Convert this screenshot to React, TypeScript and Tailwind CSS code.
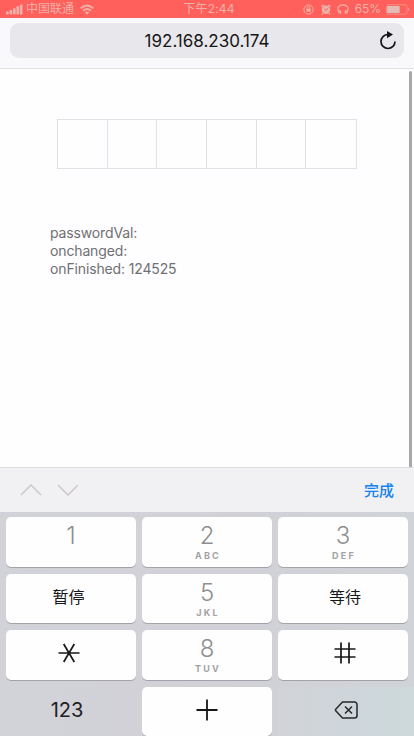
import React from "react";

const latin = "font-['Inter','Noto_Sans_CJK_SC',sans-serif]";

function StatusBar() {
  return (
    <header className="grid h-[18px] shrink-0 grid-cols-3 items-center bg-[#ff605c] text-[12px] leading-none text-[#eeb0a9]">
      <div className="flex items-center pl-[6px]">
        <svg width="17" height="11" viewBox="0 0 17 11" fill="currentColor">
          <rect x="0" y="7.5" width="2.7" height="3" rx=".7" />
          <rect x="3.5" y="6" width="2.7" height="4.5" rx=".7" />
          <rect x="7" y="4.2" width="2.7" height="6.3" rx=".7" />
          <rect x="10.4" y="2.3" width="2.7" height="8.2" rx=".7" />
          <rect x="13.8" y=".5" width="2.7" height="10" rx=".7" />
        </svg>
        <span className="ml-[3px] whitespace-nowrap">中国联通</span>
        <svg className="ml-[6px]" width="14" height="11" viewBox="0 0 14 11" fill="none" stroke="currentColor" strokeWidth="1.9">
          <path d="M.8 4.2Q7-1.4 13.2 4.2M3.2 6.7Q7 3.3 10.8 6.7" />
          <path d="M4.8 8.3Q7 6.6 9.2 8.3L7 10.7Z" fill="currentColor" stroke="none" />
        </svg>
      </div>
      <div className="whitespace-nowrap pl-[4px] text-center tracking-[0.2px]">下午2:44</div>
      <div className="flex items-center justify-end pr-[4px]">
        <svg width="11" height="11" viewBox="0 0 11 11" fill="none" stroke="currentColor">
          <circle cx="5.5" cy="5.5" r="4.6" />
          <path d="M4.2 5V3.8a1.3 1.3 0 0 1 2.6 0V5" />
          <rect x="3.4" y="4.8" width="4.2" height="3" fill="currentColor" stroke="none" />
        </svg>
        <svg className="ml-[7px]" width="10" height="11" viewBox="0 0 10 11">
          <circle cx="5" cy="5.8" r="4.2" fill="currentColor" />
          <path d="M.6 2.7 2.6.9M9.4 2.7 7.4.9M2 9.3 1 10.5M8 9.3l1 1.2" stroke="currentColor" strokeWidth="1.5" />
          <path d="m3 4.8 1.8 1.6L7.3 4" fill="none" stroke="#ff605c" />
        </svg>
        <svg className="ml-[6px]" width="12" height="11" viewBox="0 0 12 11" fill="none" stroke="currentColor" strokeWidth="1.2">
          <path d="M2.3 9C-.8 3.5 2 .8 6 .8S12.8 3.5 9.7 9" />
          <path d="M3.3 6.2v3.5M8.7 6.2v3.5" strokeWidth="1.8" />
        </svg>
        <span className="ml-[6px] tracking-[-0.1px]">65%</span>
        <svg className="ml-[5px]" width="24" height="11" viewBox="0 0 24 11">
          <rect x=".5" y=".8" width="20.5" height="9.4" rx="2" fill="none" stroke="currentColor" strokeOpacity=".55" />
          <rect x="1.2" y="2" width="12.5" height="7" rx=".8" fill="#e5bcb5" />
          <path d="M22.2 3.8q2 1.7 0 3.4z" fill="currentColor" />
        </svg>
      </div>
    </header>
  );
}

function Key({ digit, letters, children }: { digit?: string; letters?: string; children?: React.ReactNode }) {
  return (
    <button className="flex h-[49.5px] flex-col items-center rounded-[5px] bg-[#fefefe] text-[#171717] shadow-[0_1px_0_#a2a2a8]">
      {digit ? (
        <>
          <span className="mt-[4px] text-[24px] font-light leading-[29px] text-[#8e8e90]">{digit}</span>
          <span className="pt-[1px] pl-[2px] text-[9px] font-bold leading-[10px] tracking-[2.2px] text-[#a2a2a4]">{letters}</span>
        </>
      ) : (
        <span className="flex h-[46px] w-full items-center justify-center text-[16px]">{children}</span>
      )}
    </button>
  );
}

function Keypad() {
  return (
    <section className="grid h-[224px] shrink-0 grid-cols-3 content-start gap-x-[6px] gap-y-[7px] overflow-hidden bg-gradient-to-r from-[#d2d2d9] via-[#d1d1d7] to-[#d0d3d7] px-[6px] pt-[5px]">
      <Key digit="1" />
      <Key digit="2" letters="ABC" />
      <Key digit="3" letters="DEF" />
      <Key><span className="-ml-[5px]">暂停</span></Key>
      <Key digit="5" letters="JKL" />
      <Key><span className="ml-[4px]">等待</span></Key>
      <Key>
        <svg className="-ml-[5px]" width="22" height="20" viewBox="0 0 22 20" stroke="currentColor" strokeWidth="1.7">
          <path d="M.5 10h21M5.7 1l10.6 18M16.3 1 5.7 19" />
        </svg>
      </Key>
      <Key digit="8" letters="TUV" />
      <Key>
        <svg className="ml-[4px]" width="22" height="22" viewBox="0 0 22 22" stroke="currentColor" strokeWidth="1.7">
          <path d="M7 .5v21M15 .5v21M.5 7h21M.5 15h21" />
        </svg>
      </Key>
      <button className="flex h-[49px] items-center justify-center pr-[8px] pb-[3px] text-[20px] tracking-[-0.1px] text-[#202024]">123</button>
      <Key>
        <svg width="22" height="22" viewBox="0 0 22 22" stroke="currentColor" strokeWidth="1.8">
          <path d="M11 .5v21M.5 11h21" />
        </svg>
      </Key>
      <button className="-mr-[6px] flex h-[49px] items-center justify-center bg-gradient-to-r from-[#d2d3d8] via-[#ced6da] to-[#cdd9db] pb-[2px] text-[#27292b]">
        <svg width="24" height="18" viewBox="0 0 24 18" fill="none" stroke="currentColor" strokeWidth="1.5" strokeLinejoin="round">
          <path d="M8.5 1h12a2.5 2.5 0 0 1 2.5 2.5v11a2.5 2.5 0 0 1-2.5 2.5h-12L1.5 9.6v-1.2Z" />
          <path d="m11 5.5 7 7m0-7-7 7" />
        </svg>
      </button>
    </section>
  );
}

export default function App() {
  return (
    <main className={`${latin} flex h-[736px] w-[414px] flex-col overflow-hidden bg-[#fefdff]`}>
      <StatusBar />
      <nav className="h-[51px] shrink-0 border-b border-[#e3e1e5] bg-[#f9f8fb] px-[10px] pt-[5px]">
        <div className="grid h-[35px] grid-cols-[1fr_auto_1fr] items-center rounded-[9px] bg-[#e8e7eb] text-[#161616]">
          <span />
          <span className="pt-px text-[17px] leading-none">192.168.230.174</span>
          <svg className="mr-[7px] justify-self-end" width="18" height="20" viewBox="0 0 18 20" fill="none" stroke="currentColor" strokeWidth="1.7">
            <path d="M9 3.5a7 7 0 1 0 7 7" />
            <path d="m8 0 6 3.6-6 3.7Z" fill="currentColor" stroke="none" />
          </svg>
        </div>
      </nav>
      <section className="flex min-h-0 flex-1 justify-between">
        <div>
          <div className="mt-[50px] ml-[57px] grid h-[50px] w-[300px] grid-cols-6 border border-[#e2e1e5]">
            {[0, 1, 2, 3, 4, 5].map((cell) => (
              <div key={cell} className="border-r border-[#e2e1e5] last:border-r-0" />
            ))}
          </div>
          <div className="mt-[55px] ml-[50px] text-[14px] leading-[18px] tracking-[-0.14px] text-[#707072]">
            <p>passwordVal:</p>
            <p>onchanged:</p>
            <p>onFinished: 124525</p>
          </div>
        </div>
        <div className="mt-[2px] mr-[2px] w-[3px] rounded-t-full bg-[#a7a7a9]" />
      </section>
      <div className="flex h-[45px] shrink-0 items-center border-t border-[#dcdbdd] bg-[#f1f0f3] pl-[20px] pr-[20px]">
        <svg width="58" height="12" viewBox="0 0 58 12" fill="none" stroke="#cdc8cc" strokeWidth="1.5">
          <path d="m1 11 10-10 10 10M38 1l10 10L58 1" />
        </svg>
        <button className="ml-auto text-[15px] font-medium leading-none text-[#1683ed]">完成</button>
      </div>
      <Keypad />
    </main>
  );
}
